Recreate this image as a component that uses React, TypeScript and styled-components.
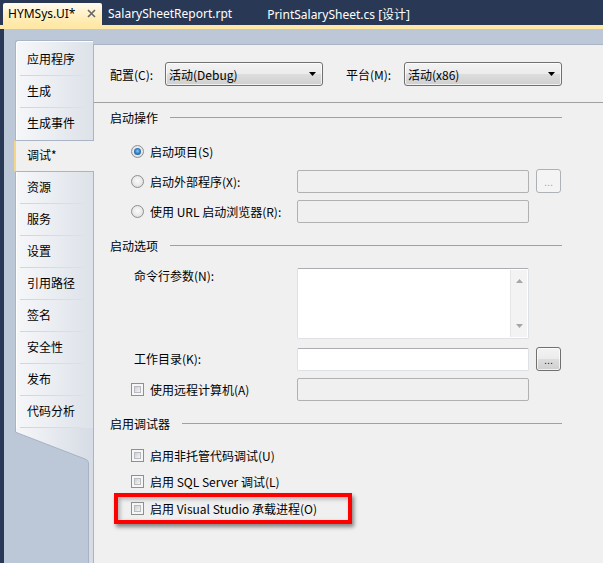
import React from 'react';
import styled, { createGlobalStyle, css } from 'styled-components';

const GlobalStyle = createGlobalStyle`
  html, body { margin: 0; padding: 0; }
  body {
    font-family: "Noto Sans CJK SC", "Noto Sans", sans-serif;
    font-size: 12px;
    color: #000;
  }
`;

const Window = styled.div`
  width: 603px;
  height: 563px;
  overflow: hidden;
  display: flex;
  flex-direction: column;
  background: #bcc7d8;
`;

/* ---------- document tab well ---------- */

const DocTabs = styled.div`
  height: 25px;
  flex: none;
  background: #293955;
  display: flex;
  align-items: flex-end;
  padding-left: 3px;
`;

const DocTab = styled.div<{ $active?: boolean }>`
  height: 22px;
  box-sizing: border-box;
  display: flex;
  align-items: center;
  font-family: "Noto Sans", "Noto Sans CJK SC", sans-serif;
  font-size: 12px;
  white-space: nowrap;
  color: #fff;
  padding: 0 29px 1px 6px;
  ${(p) =>
    p.$active &&
    css`
      width: 99px;
      padding: 0 6px 1px 5px;
      justify-content: space-between;
      color: #000;
      border-radius: 2px 2px 0 0;
      background: linear-gradient(#fffcf3, #ffefbf 60%, #ffe8a6);
    `}
`;

const CloseGlyph = () => (
  <svg width="9" height="9" viewBox="0 0 9 9">
    <path d="M1 1 L8 8 M8 1 L1 8" stroke="#666" strokeWidth="1.6" fill="none" />
  </svg>
);

const TabRule = styled.div`
  height: 4px;
  flex: none;
  background: #ffe8a6;
`;

/* ---------- workspace ---------- */

const Workspace = styled.div`
  flex: 1;
  display: flex;
  min-height: 0;
`;

const Gutter = styled.div`
  width: 4px;
  flex: none;
  background: #293955;
`;

const Stage = styled.div`
  flex: 1;
  display: flex;
  padding: 11px 0 0 11px;
  min-width: 0;
`;

/* ---------- property page navigator ---------- */

const Nav = styled.nav`
  width: 78px;
  flex: none;
  display: flex;
  flex-direction: column;
  position: relative;
  z-index: 1;
`;

const NavList = styled.ul`
  list-style: none;
  margin: 0;
  padding: 3px 0 0;
  border-top: 1px solid #a9b4c4;
  border-left: 1px solid #a9b4c4;
  border-top-left-radius: 3px;
  box-shadow: inset 1px 1px 0 #fff;
  background: linear-gradient(to right, #f6f7f9, #dde2e9);
`;

const NavItem = styled.li<{ $selected?: boolean; $rule?: boolean }>`
  position: relative;
  height: 32px;
  box-sizing: border-box;
  display: flex;
  align-items: center;
  padding: 0 0 3px 11px;
  white-space: nowrap;
  ${(p) =>
    p.$rule &&
    css`
      &::after {
        content: '';
        position: absolute;
        left: 4px;
        right: 9px;
        bottom: 0;
        height: 1px;
        background: linear-gradient(to right, #cfd5de, #dde2e9);
      }
    `}
  ${(p) =>
    p.$selected &&
    css`
      margin: 0 -1px 0 -2px;
      background: #f0f0f0;
      border-top: 1px solid #a9b4c4;
      border-bottom: 1px solid #a9b4c4;
      border-left: 2px solid #f3d68c;
    `}
`;

const NavTail = styled.div`
  flex: 1;
  min-height: 0;
  & > svg {
    display: block;
  }
`;

/* ---------- property panel ---------- */

const Panel = styled.main`
  flex: 1;
  min-width: 0;
  margin-top: 4px;
  background: #f0f0f0;
  border-left: 1px solid #a9b4c4;
  border-top: 1px solid #a9b4c4;
  display: flex;
  flex-direction: column;
`;

const TopBar = styled.div`
  display: grid;
  grid-template-columns: 55px 158px 81px 158px;
  align-items: center;
  height: 58px;
  box-sizing: border-box;
  padding: 17px 0 16px 16px;
  border-bottom: 1px solid #a0a0a0;
`;

const BarLabel = styled.label<{ $indent?: number }>`
  padding-left: ${(p) => p.$indent ?? 0}px;
  white-space: nowrap;
`;

const Combo = styled.div`
  height: 24px;
  box-sizing: border-box;
  border: 1px solid #707070;
  border-radius: 3px;
  background: linear-gradient(#f3f3f3, #ebebeb 50%, #dddddd 51%, #cfcfcf);
  box-shadow: inset 0 0 0 1px rgba(255, 255, 255, 0.7);
  display: flex;
  align-items: center;
  justify-content: space-between;
  padding: 0 6px 0 3px;
  white-space: nowrap;
`;

const DropArrow = () => (
  <svg width="7" height="4" viewBox="0 0 7 4">
    <path d="M0 0 H7 L3.5 4 Z" fill="#000" />
  </svg>
);

const Body = styled.div`
  display: flex;
  flex-direction: column;
  padding: 0 41px 0 16px;
`;

const GroupHeader = styled.div<{ $top: number }>`
  margin-top: ${(p) => p.$top}px;
  height: 16px;
  display: flex;
  align-items: center;
  gap: 12px;
  white-space: nowrap;
  &::after {
    content: '';
    flex: 1;
    height: 1px;
    background: #a0a0a0;
  }
`;

const Group = styled.div<{ $top: number }>`
  margin-top: ${(p) => p.$top}px;
  padding-left: 21px;
  display: flex;
  flex-direction: column;
`;

const Row = styled.div<{ $h: number; $top?: number; $start?: boolean }>`
  height: ${(p) => p.$h}px;
  margin-top: ${(p) => p.$top ?? 0}px;
  display: flex;
  align-items: ${(p) => (p.$start ? 'flex-start' : 'center')};
`;

const Lead = styled.div`
  width: 166px;
  flex: none;
  display: flex;
  align-items: center;
`;

const PlainLabel = styled.span`
  padding-left: 3px;
  line-height: 16px;
  white-space: nowrap;
`;

const Choice = styled.label`
  display: inline-flex;
  align-items: center;
  gap: 6px;
  white-space: nowrap;
`;

const Radio = styled.span<{ $checked?: boolean }>`
  width: 13px;
  height: 13px;
  box-sizing: border-box;
  flex: none;
  border-radius: 50%;
  border: 1px solid #8e8f8f;
  background: radial-gradient(circle at 50% 45%, #fbfbfb 0%, #e9e9e9 55%, #cfcfcf 100%);
  display: inline-flex;
  align-items: center;
  justify-content: center;
  ${(p) =>
    p.$checked &&
    css`
      &::before {
        content: '';
        width: 7px;
        height: 7px;
        border-radius: 50%;
        background: radial-gradient(circle at 50% 45%, #8ecbf5 0%, #2c79c2 50%, #133f78 100%);
      }
    `}
`;

const CheckBox = styled.span`
  width: 13px;
  height: 13px;
  box-sizing: border-box;
  flex: none;
  border: 1px solid #8e8f8f;
  background: #f6f6f6;
  padding: 2px;
  &::before {
    content: '';
    display: block;
    width: 100%;
    height: 100%;
    box-sizing: border-box;
    border: 1px solid #b7bbc0;
    background: linear-gradient(135deg, #cdd0d4, #f4f4f4);
  }
`;

const Field = styled.div<{ $disabled?: boolean }>`
  width: 232px;
  height: 23px;
  box-sizing: border-box;
  flex: none;
  border-radius: 2px;
  ${(p) =>
    p.$disabled
      ? css`
          background: #f0f0f0;
          border: 1px solid #b1b1b1;
        `
      : css`
          background: #fff;
          border: 1px solid #dde1e6;
          border-top-color: #abadb3;
        `}
`;

const Browse = styled.button`
  width: 25px;
  height: 24px;
  margin-left: 7px;
  padding: 0 0 4px;
  box-sizing: border-box;
  flex: none;
  border-radius: 3px;
  font-family: "Liberation Sans", sans-serif;
  font-size: 11px;
  display: flex;
  align-items: flex-end;
  justify-content: center;
  border: 1px solid #707070;
  color: #1a1a4a;
  background: linear-gradient(#f3f3f3, #ebebeb 50%, #dddddd 51%, #cfcfcf);
  box-shadow: inset 0 0 0 1px rgba(255, 255, 255, 0.7);
  &:disabled {
    border-color: #adb2b5;
    background: #f4f4f4;
    color: #a8a8a8;
    box-shadow: none;
  }
`;

const Memo = styled.div`
  width: 232px;
  height: 71px;
  box-sizing: border-box;
  flex: none;
  display: flex;
  justify-content: flex-end;
  background: #fff;
  border: 1px solid #dde1e6;
  border-top-color: #abadb3;
  border-radius: 2px;
  padding: 1px;
`;

const ScrollTrack = styled.div`
  width: 16px;
  background: #f3f3f3;
  border-left: 1px solid #e6e6e6;
  display: flex;
  flex-direction: column;
  justify-content: space-between;
  align-items: center;
  padding: 9px 0;
`;

const ScrollArrow = ({ up }: { up?: boolean }) => (
  <svg width="7" height="4" viewBox="0 0 7 4">
    <path d={up ? 'M0 4 H7 L3.5 0 Z' : 'M0 0 H7 L3.5 4 Z'} fill="#a6a6a6" />
  </svg>
);

/* red frame drawn over the hosting-process option */
const Callout = styled.div`
  position: relative;
  align-self: stretch;
  display: flex;
  align-items: center;
  &::after {
    content: '';
    position: absolute;
    left: -17px;
    top: -2px;
    bottom: -2px;
    width: 238px;
    box-sizing: border-box;
    border: 4px solid #ff0000;
    box-shadow: 2px 3px 4px rgba(0, 0, 0, 0.45), inset 2px 2px 4px rgba(0, 0, 0, 0.28);
    pointer-events: none;
  }
`;

const pages = [
  '应用程序',
  '生成',
  '生成事件',
  '调试*',
  '资源',
  '服务',
  '设置',
  '引用路径',
  '签名',
  '安全性',
  '发布',
  '代码分析',
];
const selectedPage = 3;

export default function App() {
  return (
    <>
      <GlobalStyle />
      <Window>
        <DocTabs>
          <DocTab $active>
            HYMSys.UI*
            <CloseGlyph />
          </DocTab>
          <DocTab>SalarySheetReport.rpt</DocTab>
          <DocTab>PrintSalarySheet.cs [设计]</DocTab>
        </DocTabs>
        <TabRule />
        <Workspace>
          <Gutter />
          <Stage>
            <Nav>
              <NavList>
                {pages.map((name, i) => (
                  <NavItem
                    key={name}
                    $selected={i === selectedPage}
                    $rule={i !== selectedPage && i !== selectedPage - 1}
                  >
                    {name}
                  </NavItem>
                ))}
              </NavList>
              <NavTail>
                <svg width="78" height="100%">
                  <defs>
                    <linearGradient id="navFill" x1="0" y1="0" x2="78" y2="0" gradientUnits="userSpaceOnUse">
                      <stop offset="0" stopColor="#f6f7f9" />
                      <stop offset="1" stopColor="#d6dce5" />
                    </linearGradient>
                  </defs>
                  <path d="M0 0 H78 V2000 H73 V35 Q73 32 70 31 L0 4 Z" fill="url(#navFill)" />
                  <path d="M0.5 0 V4.2 L70 31 Q73.5 32 73.5 35 V2000" stroke="#a7b2c3" fill="none" />
                </svg>
              </NavTail>
            </Nav>
            <Panel>
              <TopBar>
                <BarLabel>配置(C):</BarLabel>
                <Combo>
                  活动(Debug)
                  <DropArrow />
                </Combo>
                <BarLabel $indent={23}>平台(M):</BarLabel>
                <Combo>
                  活动(x86)
                  <DropArrow />
                </Combo>
              </TopBar>
              <Body>
                <GroupHeader $top={6}>启动操作</GroupHeader>
                <Group $top={11}>
                  <Row $h={30}>
                    <Choice>
                      <Radio $checked />
                      启动项目(S)
                    </Choice>
                  </Row>
                  <Row $h={30}>
                    <Lead>
                      <Choice>
                        <Radio />
                        启动外部程序(X):
                      </Choice>
                    </Lead>
                    <Field $disabled />
                    <Browse disabled>...</Browse>
                  </Row>
                  <Row $h={30}>
                    <Lead>
                      <Choice>
                        <Radio />
                        使用 URL 启动浏览器(R):
                      </Choice>
                    </Lead>
                    <Field $disabled />
                  </Row>
                </Group>

                <GroupHeader $top={11}>启动选项</GroupHeader>
                <Group $top={15}>
                  <Row $h={71} $start>
                    <Lead>
                      <PlainLabel>命令行参数(N):</PlainLabel>
                    </Lead>
                    <Memo>
                      <ScrollTrack>
                        <ScrollArrow up />
                        <ScrollArrow />
                      </ScrollTrack>
                    </Memo>
                  </Row>
                  <Row $h={30} $top={5}>
                    <Lead>
                      <PlainLabel>工作目录(K):</PlainLabel>
                    </Lead>
                    <Field />
                    <Browse>...</Browse>
                  </Row>
                  <Row $h={30}>
                    <Lead>
                      <Choice>
                        <CheckBox />
                        使用远程计算机(A)
                      </Choice>
                    </Lead>
                    <Field $disabled />
                  </Row>
                </Group>

                <GroupHeader $top={11}>启用调试器</GroupHeader>
                <Group $top={11}>
                  <Row $h={26.5}>
                    <Choice>
                      <CheckBox />
                      启用非托管代码调试(U)
                    </Choice>
                  </Row>
                  <Row $h={26.5}>
                    <Choice>
                      <CheckBox />
                      启用 SQL Server 调试(L)
                    </Choice>
                  </Row>
                  <Row $h={26.5}>
                    <Callout>
                      <Choice>
                        <CheckBox />
                        启用 Visual Studio 承载进程(O)
                      </Choice>
                    </Callout>
                  </Row>
                </Group>
              </Body>
            </Panel>
          </Stage>
        </Workspace>
      </Window>
    </>
  );
}
